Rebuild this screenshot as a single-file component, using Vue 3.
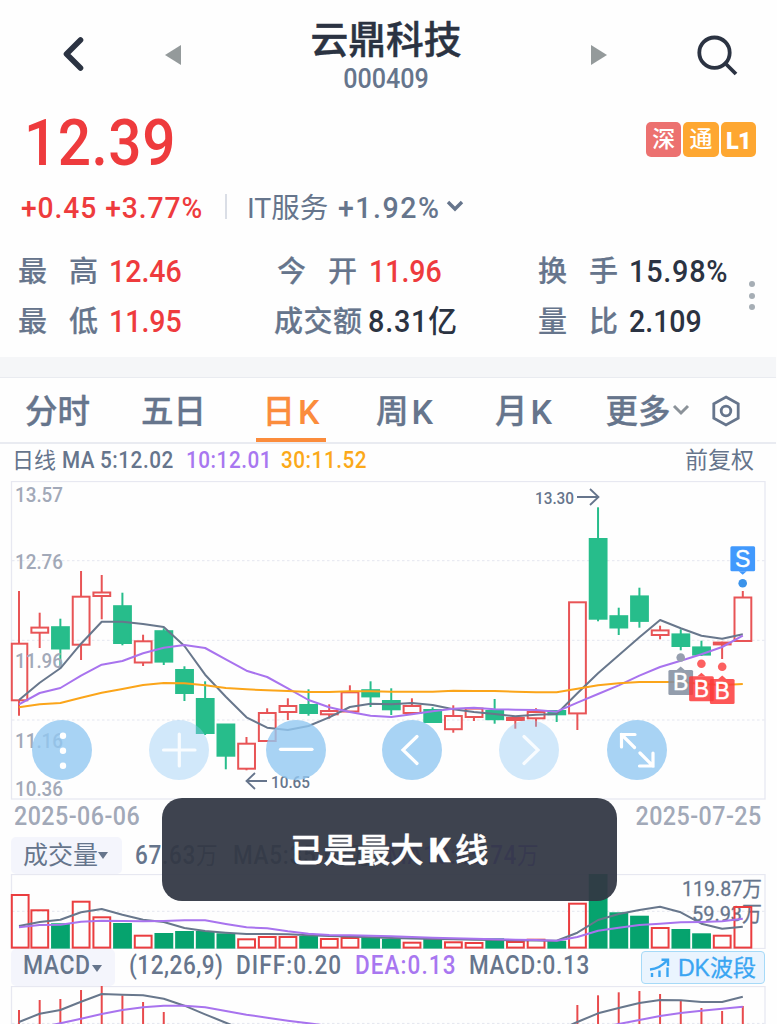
<template>
  <div class="stock-page">
    <header class="header">
      <svg class="back" width="26" height="40" viewBox="0 0 26 40">
        <path d="M20.5 6 L6.5 20 L20.5 34" />
      </svg>
      <svg class="prev" width="16" height="20" viewBox="0 0 16 20"><path d="M0 10 L16 0 V20 Z" /></svg>
      <div class="title">
        <h1>云鼎科技</h1>
        <div class="code num">000409</div>
      </div>
      <svg class="next" width="16" height="20" viewBox="0 0 16 20"><path d="M16 10 L0 0 V20 Z" /></svg>
      <svg class="search" width="44" height="44" viewBox="0 0 44 44">
        <circle cx="19.5" cy="18.7" r="15.2" />
        <path d="M30.5 29.5 L41 40" />
      </svg>
    </header>

    <section class="quote">
      <div class="price-row">
        <div class="price num">12.39</div>
        <div class="badges">
          <span class="badge red">深</span>
          <span class="badge">通</span>
          <span class="badge level">L1</span>
        </div>
      </div>
      <div class="change-row">
        <span class="change num">+0.45 +3.77%</span>
        <span class="divider"></span>
        <span class="sector">IT服务</span>
        <span class="sector-change num">+1.92%</span>
        <svg width="18" height="12" viewBox="0 0 18 12"><path d="M2 2 L9 9 L16 2" /></svg>
      </div>
      <div class="stats">
        <div v-for="item in stats" :key="item.label" class="stat">
          <span class="stat-label" :class="{ full: item.label.length === 3 }">
            <i v-for="ch in item.label" :key="ch">{{ ch }}</i>
          </span>
          <span class="stat-value num" :class="{ up: item.up, wide: item.wide }">{{ item.value }}</span>
        </div>
        <div class="more-dots"><i></i><i></i><i></i></div>
      </div>
    </section>

    <nav class="tabs">
      <a v-for="tab in tabs" :key="tab.name" class="tab" :class="[tab.key, { active: tab.key === activeTab }]"
         @click="activeTab = tab.key">{{ tab.name }}<b v-if="tab.k">K</b></a>
      <svg class="tab-arrow" width="18" height="14" viewBox="0 0 18 14"><path d="M2 3 L9 10 L16 3" /></svg>
      <svg class="setting" width="30" height="32" viewBox="0 0 30 32">
        <path d="M15 2 L27.2 8.8 V23.2 L15 30 L2.8 23.2 V8.8 Z" />
        <circle cx="15" cy="16" r="4.8" />
      </svg>
    </nav>

    <div class="ma-row">
      <span class="line-name">日线</span>
      <span class="ma num ma-label">MA</span>
      <span class="ma num ma5">5:12.02</span>
      <span class="ma num ma10">10:12.01</span>
      <span class="ma num ma30">30:11.52</span>
      <span class="adjust">前复权</span>
    </div>

    <div class="k-chart">
      <svg width="777" height="320" viewBox="0 481 777 320">
        <rect class="frame" x="11.5" y="481.5" width="753.5" height="317.5" />
        <line v-for="y in [560.7, 640.3, 720]" :key="y" class="grid" x1="12" x2="765" :y1="y" :y2="y" />
        <g v-for="(c, i) in candles" :key="i" :class="c[0] === 1 ? 'rise' : 'fall'">
          <line :x1="cx(i)" :x2="cx(i)" :y1="c[3]" :y2="c[1]" />
          <line :x1="cx(i)" :x2="cx(i)" :y1="c[2]" :y2="c[4]" />
          <rect :x="i === 0 ? 11.8 : cx(i) - 8.3" :y="c[1]" :width="i === 0 ? 15.5 : 16.8" :height="c[2] - c[1]" />
        </g>
        <g class="axis">
          <text v-for="l in priceLabels" :key="l[0]" x="15" :y="l[1]" textLength="48" lengthAdjust="spacingAndGlyphs">{{ l[0] }}</text>
        </g>
        <polyline class="line gray" :points="toPoints(ma5)" />
        <polyline class="line purple" :points="toPoints(ma10)" />
        <polyline class="line yellow" :points="toPoints(ma30)" />
        <g class="extreme">
          <text x="535" y="503.5" textLength="39" lengthAdjust="spacingAndGlyphs">13.30</text>
          <path d="M577 497 H598 M590 489 L598.5 497 L590 505" />
          <text x="271" y="787.8" textLength="39" lengthAdjust="spacingAndGlyphs">10.65</text>
          <path d="M267 781 H247 M255 773 L246.5 781 L255 789" />
        </g>
        <g v-for="m in marks" :key="m.x" class="mark">
          <circle :cx="m.x" :cy="m.dot" r="4.3" :fill="m.dotColor" />
          <rect :x="m.x - 12.3" :y="m.y" width="24.7" height="25" rx="1.5" :fill="m.color" />
          <path :d="markTip(m)" :fill="m.color" />
          <text :x="m.x" :y="m.y + 20.3">{{ m.text }}</text>
        </g>
      </svg>
      <div class="chart-tools">
        <button v-for="t in tools" :key="t.name" class="tool" :class="{ disabled: t.disabled, last: t.name === 'full' }">
          <svg width="60" height="60" viewBox="0 0 60 60">
            <path :d="t.path" />
          </svg>
        </button>
      </div>
    </div>

    <div class="dates">
      <span class="num">2025-06-06</span>
      <span class="num">2025-07-25</span>
    </div>

    <div class="indicator volume-head">
      <span class="selector">成交量<i class="caret"></i></span>
      <span class="num v1">67.63<em>万</em></span>
      <span class="num v2">MA5:35.67<em>万</em></span>
      <span class="num v3">MA10:45.74<em>万</em></span>
    </div>

    <svg class="volume-chart" width="777" height="75" viewBox="0 874 777 75">
      <rect class="frame" x="11.5" y="874.5" width="753.5" height="74" />
      <line class="grid" x1="12" x2="765" y1="911.3" y2="911.3" />
      <g class="vol-label">
        <text x="682" y="896" textLength="80" lengthAdjust="spacingAndGlyphs">119.87万</text>
        <text x="692" y="921" textLength="70" lengthAdjust="spacingAndGlyphs">59.93万</text>
      </g>
      <g v-for="(v, i) in volumes" :key="i" :class="candles[i][0] === 1 ? 'vol-rise' : 'vol-fall'">
        <rect :x="i === 0 ? 11.8 : cx(i) - 8.3" :y="v + 1" width="16.8" :height="946.6 - v" />
      </g>
      <polyline class="line gray" :points="toPoints(volMa5)" />
      <polyline class="line purple" :points="toPoints(volMa10)" />
    </svg>

    <div class="indicator macd-head">
      <span class="selector num"><span>MACD</span><i class="caret"></i></span>
      <span class="num m1">(12,26,9)</span>
      <span class="num m2">DIFF:0.20</span>
      <span class="num m3">DEA:0.13</span>
      <span class="num m4">MACD:0.13</span>
      <button class="dk">
        <svg width="22" height="22" viewBox="0 0 22 22">
          <path d="M1 12.5 C8 12 14 8 18 3.5 M12.5 2.8 H19 V9 M3 16 V20 M10.5 13.5 V20 M18.5 10.5 V20" />
        </svg>
        <span>DK波段</span>
      </button>
    </div>

    <svg class="macd-chart" width="777" height="38" viewBox="0 986 777 38">
      <rect class="frame" x="11.5" y="986.5" width="753.5" height="60" />
      <line class="grid" x1="12" x2="765" y1="1023.4" y2="1023.4" />
      <line v-for="b in macdBars" :key="b[0]" class="macd-bar" :x1="cx(b[0])" :x2="cx(b[0])" :y1="b[1]" y2="1024" />
      <polyline class="line gray" :points="toPoints(diff)" />
      <polyline class="line purple" :points="toPoints(dea)" />
    </svg>

    <div v-if="toast" class="toast"><span>已是最大</span><b>K</b><span>线</span></div>
  </div>
</template>

<script setup>
import { ref } from 'vue'

const activeTab = ref('day')
const toast = ref(true)

const stats = [
  { label: '最高', value: '12.46', up: true },
  { label: '今开', value: '11.96', up: true },
  { label: '换手', value: '15.98%', wide: true },
  { label: '最低', value: '11.95', up: true },
  { label: '成交额', value: '8.31亿', wide: true },
  { label: '量比', value: '2.109' }
]

const tabs = [
  { key: 'time', name: '分时' },
  { key: 'five', name: '五日' },
  { key: 'day', name: '日', k: true },
  { key: 'week', name: '周', k: true },
  { key: 'month', name: '月', k: true },
  { key: 'more', name: '更多' }
]

const tools = [
  { name: 'more', path: 'M31 15.8 v.01 M31 30.8 v.01 M31 45.8 v.01' },
  { name: 'plus', path: 'M14.5 30 H46 M30.3 14 V46', disabled: true },
  { name: 'minus', path: 'M14.5 29.3 H46' },
  { name: 'left', path: 'M35 16.5 L21 30 L35 43.5' },
  { name: 'right', path: 'M25 16.5 L39 30 L25 43.5', disabled: true },
  { name: 'full', path: 'M14.5 27 V14.5 H28 M14.5 14.5 L27.5 27.5 M33 33 L46 46 M32.5 46 H46 V33' }
]

// [1涨 0跌, 实体上沿, 实体下沿, 最高, 最低]
const candles = [
  [1, 643.7, 700.3, 591, 715.7], [1, 627.6, 632.7, 612.7, 648], [0, 627.2, 648.5, 618.7, 665.7],
  [1, 596.7, 644.7, 571, 660], [1, 592.5, 596, 575, 619.3], [0, 606.2, 643, 592.7, 645.3],
  [1, 641.3, 662.5, 634.7, 666], [0, 631.2, 661.6, 628.3, 665], [0, 670, 693, 666.3, 701],
  [0, 699, 733, 681.3, 735], [0, 724.5, 755.7, 724, 769.3], [1, 743.7, 768.7, 737, 770.3],
  [1, 713, 741, 708.3, 741], [1, 706, 712, 698.3, 720], [0, 705, 713, 689.3, 715.7],
  [1, 711, 714.3, 704.3, 718.7], [1, 692.3, 711.5, 685.3, 712], [0, 690.2, 696.4, 681.3, 707],
  [0, 701, 709.3, 688.3, 715], [1, 706, 713, 698.3, 714], [0, 710, 722, 707.3, 722],
  [1, 716, 729.2, 705.3, 732.7], [1, 708.6, 717, 708, 721], [0, 711, 719.2, 699, 723.7],
  [1, 718, 720, 717, 728.7], [1, 712, 718.3, 708.3, 726.7], [0, 711, 714.3, 710, 722],
  [1, 602.3, 713.4, 602, 730], [0, 539, 618.7, 507.3, 621.3], [0, 616.2, 627.5, 607.7, 635],
  [0, 596.4, 620.9, 587.7, 627.7], [1, 630.4, 635, 625.7, 639.3], [0, 634.4, 646, 629.3, 650.3],
  [0, 647.4, 654.6, 640.7, 656], [1, 642.6, 644.4, 641.7, 659], [1, 597.5, 641, 591, 641]
]

const ma5 = [700, 682.7, 668.3, 643.7, 621.7, 621.7, 624, 627, 646, 674.7, 696.7, 717.3, 727.7, 730, 726, 717.3, 707, 703.7,
  704.3, 703, 705, 709.3, 712, 714, 716.3, 714.7, 714, 693.3, 673.3, 655.3, 637.3, 620, 628.3, 635.7, 638.7, 634.3]
const ma10 = [704.3, 693, 688, 675.7, 664.7, 661, 653.3, 647.7, 645, 648, 659.3, 670.7, 677, 688.3, 700, 707.3, 712, 715.7,
  717, 714.3, 711.3, 708.7, 707.7, 709.3, 709.7, 710, 711.7, 702.7, 694, 685.3, 675.7, 667, 660.7, 654.3, 647, 635.7]
const ma30 = [707.3, 704.3, 703, 697.7, 692.7, 689, 685, 683, 683.3, 685.3, 688, 689.3, 690.3, 691, 692, 692, 691.3, 691.3,
  691.7, 691.7, 691.7, 690.7, 691, 691, 691.7, 692.3, 692.3, 688.7, 685.3, 683.3, 682, 682, 682, 684, 685, 684]

const volumes = [894, 909.3, 923.3, 900.7, 916.3, 923, 934.7, 933, 931, 931, 933.3, 938.3, 936, 936, 936, 938, 937, 937,
  938.7, 941.7, 939, 941.3, 942, 938.3, 941, 938.7, 940.7, 902.7, 874, 912.3, 915.7, 927, 929, 933.3, 934.7, 906]
const volMa5 = [926, 922, 919.7, 912.3, 909, 914.7, 919.7, 922, 928, 931, 932.7, 934, 934, 934.3, 935.3, 936, 936.5, 937.3,
  938, 938.5, 939, 939.3, 939.7, 940, 940.3, 940.5, 940.7, 932.7, 920, 914, 910, 906.7, 912.3, 923.7, 928.7, 926.7]
const volMa10 = [927.3, 925, 924.7, 921.7, 920.7, 921, 921.3, 921, 920.3, 920.3, 924, 927.3, 928.3, 931.3, 933.7, 935, 935.3,
  935.7, 936.3, 937, 937.7, 938.3, 938.7, 939.3, 939.7, 940, 940.7, 937, 930.7, 927.7, 925, 923.7, 922.3, 922, 921.3, 918.7]

const macdBars = [[0, 1010], [1, 1000], [2, 999], [3, 990], [4, 986], [5, 995.3], [6, 1002], [7, 1012],
  [27, 1005], [28, 995.3], [29, 992.3], [30, 991], [31, 994], [32, 1001], [33, 1008], [34, 1011], [35, 1006]]
const diff = [1022, 1013.7, 1010, 1001.7, 994, 994.7, 995.3, 998.7, 1005.7, 1014.3, 1022.7, 1031, 1040, 1040, 1040, 1040, 1040,
  1040, 1040, 1040, 1040, 1040, 1040, 1040, 1040, 1040, 1031, 1022, 1013.3, 1008, 1003, 1000, 1000.3, 1002, 1002, 996.7]
const dea = [1032, 1027.5, 1023.3, 1018.7, 1014, 1010, 1007.3, 1005.7, 1005.7, 1007.3, 1011, 1014.7, 1017.7, 1020.7, 1023.3, 1026,
  1034, 1040, 1040, 1040, 1040, 1040, 1040, 1040, 1040, 1040, 1040, 1034, 1028, 1024, 1020, 1016, 1013, 1010.7, 1008.7, 1006.7]

const priceLabels = [['13.57', 502], ['12.76', 569], ['11.96', 667.5], ['11.16', 747.5], ['10.36', 795.5]]

const marks = [
  { text: 'S', x: 742.7, y: 546.3, dot: 583.3, color: '#4199fd', dotColor: '#3b93ea' },
  { text: 'B', x: 680.7, y: 670, dot: 657.5, color: 'rgba(132,143,160,.88)', dotColor: '#969fae' },
  { text: 'B', x: 701.4, y: 676.3, dot: 663.7, color: 'rgba(253,58,58,.85)', dotColor: '#fc6060' },
  { text: 'B', x: 722.2, y: 679, dot: 666.7, color: 'rgba(253,58,58,.85)', dotColor: '#fc6060' }
]

const cx = (i) => Math.round((19 + i * 20.68) * 100) / 100

const toPoints = (list) => list.map((y, i) => `${cx(i)},${y}`).join(' ')

const markTip = (m) => {
  if (m.text === 'S') return `M${m.x - 4} ${m.y + 25} h8 l-4 3.5 z`
  return `M${m.x - 4} ${m.y} h8 l-4 -3.5 z`
}
</script>

<style>
body {
  margin: 0;
  background: #fff;
}
</style>

<style scoped>
.stock-page {
  position: relative;
  width: 777px;
  height: 1024px;
  overflow: hidden;
  background: #fefefe;
  color: #66758c;
  font-family: Roboto, "Noto Sans CJK SC", sans-serif;
}

.num {
  display: inline-block;
  font-weight: 500;
  white-space: nowrap;
  transform: scaleX(0.9);
  transform-origin: left center;
}

i, em {
  font-style: normal;
}

svg {
  display: block;
  fill: none;
  flex: none;
}

/* 顶部 */
.header {
  display: flex;
  height: 104px;
}

.back {
  margin: 34px 0 0 60px;
  stroke: #2b3342;
  stroke-width: 5.6;
  stroke-linecap: round;
  stroke-linejoin: round;
}

.prev,
.next {
  margin-top: 44.5px;
  fill: #949a9b;
}

.prev {
  margin-left: 79px;
}

.title {
  width: 410px;
  text-align: center;
}

h1 {
  margin: 17px 0 0;
  font-size: 37.8px;
  line-height: 46px;
  font-weight: 500;
  color: #2b3342;
  -webkit-text-stroke: 0.45px #2b3342;
}

.code {
  font-size: 27px;
  line-height: 32px;
  transform: scaleX(0.93);
  transform-origin: center;
}

.search {
  margin: 33.5px 0 0 88px;
  stroke: #2b3342;
  stroke-width: 3.8;
}

/* 报价 */
.quote {
  height: 253px;
}

.price-row {
  display: flex;
  justify-content: space-between;
  height: 76px;
  padding: 0 21px 0 24px;
}

.price {
  font-size: 65px;
  line-height: 79px;
  letter-spacing: 0.6px;
  color: #ee3b3d;
}

.badges {
  display: flex;
  gap: 2px;
  margin-top: 17.5px;
}

.badge {
  width: 35.3px;
  height: 35.3px;
  border-radius: 5px;
  background: #fea731;
  color: #fff;
  font-size: 23px;
  font-weight: 500;
  line-height: 36px;
  text-align: center;
}

.badge.level {
  font-weight: 900;
  font-size: 23.5px;
  line-height: 38px;
  letter-spacing: -0.8px;
}

.badge.red {
  background: #ec7170;
}

.change-row {
  display: flex;
  align-items: center;
  height: 52px;
  padding-left: 21px;
}

.change {
  width: 204px;
  margin-top: 2px;
  font-size: 30px;
  color: #ee3b3d;
  transform: scaleX(0.94);
  letter-spacing: 1px;
}

.divider {
  width: 2px;
  height: 25px;
  background: #dadee6;
}

.sector {
  width: 91px;
  margin: 5px 0 0 20px;
  font-size: 28.5px;
  line-height: 40px;
  white-space: nowrap;
}

.sector-change {
  width: 109px;
  margin-top: 2px;
  font-size: 30px;
  transform: scaleX(0.95);
  letter-spacing: 1.6px;
}

.change-row svg {
  margin-left: -1px;
  stroke: #66758c;
  stroke-width: 3.4;
}

.stats {
  position: relative;
  display: grid;
  grid-template-columns: 256px 264px 220px;
  grid-auto-rows: 50px;
  padding: 15px 0 0 18px;
}

.stat {
  display: flex;
  align-items: center;
}

.stat-label {
  display: flex;
  justify-content: space-between;
  width: 80px;
  margin: 0 11px 0 0;
  font-size: 29px;
  line-height: 50px;
  font-weight: 500;
  -webkit-text-stroke: 0.2px #66758c;
}

.stat:nth-child(2) .stat-label {
  margin-left: 3px;
  margin-right: 12px;
}

.stat-label.full {
  width: 88px;
  margin-right: 6px;
}

.stat-value {
  font-size: 31px;
  line-height: 50px;
  color: #2b3342;
  transform: scaleX(0.92);
}

.stat-value.wide {
  transform: scaleX(0.93);
  letter-spacing: 0.8px;
}

.stat-value.up {
  color: #ee3b3d;
}

.more-dots {
  position: absolute;
  left: 749px;
  top: 49px;
  display: flex;
  flex-direction: column;
  gap: 5.6px;
}

.more-dots i {
  width: 6px;
  height: 6px;
  border-radius: 50%;
  background: #a6aeb5;
}

/* 周期 */
.tabs {
  display: flex;
  box-sizing: border-box;
  width: 776px;
  height: 87px;
  border-top: 20px solid #f5f6f8;
  border-bottom: 2px solid #e9ebf1;
  box-shadow: inset 0 1px 0 #e9ebf0;
  padding-left: 25px;
}

.tab {
  display: flex;
  box-sizing: border-box;
  height: 64.5px;
  font-size: 32.5px;
  font-weight: 500;
  line-height: 70px;
  white-space: nowrap;
  -webkit-text-stroke: 0.35px currentColor;
}

.tab b {
  margin-left: 3px;
  font-size: 34px;
  font-weight: 500;
  -webkit-text-stroke: 0;
}

.time {
  width: 116px;
}

.five {
  width: 114.5px;
}

.day {
  width: 70.5px;
  padding-left: 7px;
}

.week {
  margin-left: 50px;
  width: 119px;
}

.month {
  width: 110.5px;
}

.more {
  width: 66px;
}

.active {
  color: #fb8c3c;
  border-bottom: 4.5px solid #fb8c3c;
}

.tab-arrow {
  margin-top: 26px;
  stroke: #8b9299;
  stroke-width: 3;
}

.setting {
  margin: 17.5px 0 0 21px;
  stroke: #66758c;
  stroke-width: 2.8;
}

/* 均线 */
.ma-row {
  display: flex;
  align-items: center;
  box-sizing: border-box;
  height: 37px;
  padding: 0 23px 4px 12px;
  line-height: 33px;
}

.line-name {
  width: 50px;
  font-size: 22px;
}

.ma {
  font-size: 23px;
  letter-spacing: 0.6px;
}

.ma-label {
  width: 38px;
}

.ma5 {
  width: 86px;
}

.ma10 {
  width: 95px;
  color: #a877f0;
}

.ma30 {
  color: #fba919;
}

.adjust {
  margin-left: auto;
  font-size: 23px;
}

/* K线图 */
.k-chart {
  position: relative;
  height: 320px;
}

.frame {
  stroke: #e7e8f1;
  stroke-width: 1.3;
}

.grid {
  stroke: #e4e6ef;
  stroke-width: 1;
  stroke-dasharray: 2.5 2.5;
}

.rise {
  stroke: #e85456;
  stroke-width: 2;
  fill: none;
}

.fall {
  stroke: #27bd8b;
  stroke-width: 2;
  fill: #27bd8b;
}

.line {
  fill: none;
  stroke-width: 2;
  stroke-linejoin: round;
}

.gray {
  stroke: #68778c;
}

.purple {
  stroke: #a873ee;
}

.yellow {
  stroke: #fba51a;
}

.axis text {
  font-size: 20.5px;
  font-weight: 500;
  fill: #a2a9b8;
}

.extreme text {
  font-size: 17px;
  font-weight: 500;
  fill: #66758c;
}

.extreme path {
  stroke: #66758c;
  stroke-width: 1.8;
}

.mark text {
  font-family: "Liberation Sans", sans-serif;
  font-size: 23px;
  fill: #fff;
  stroke: #fff;
  stroke-width: 0.4;
  text-anchor: middle;
}

.chart-tools {
  position: absolute;
  left: 32px;
  top: 238.5px;
  display: flex;
  gap: 56.8px;
}

.tool {
  width: 60px;
  height: 60px;
  padding: 0;
  border: none;
  border-radius: 50%;
  background: rgba(146, 200, 241, 0.8);
}

.tool.last {
  margin-left: -9px;
}

.tool path {
  stroke: #fff;
  stroke-width: 3.2;
  stroke-linecap: round;
}

.tool:first-child path {
  stroke-width: 6.4;
}

.tool.disabled {
  background: rgba(143, 199, 244, 0.4);
}

.tool.disabled path {
  stroke: rgba(255, 255, 255, 0.85);
}

/* 日期 */
.dates {
  display: flex;
  justify-content: space-between;
  height: 36px;
  padding: 0 15px 0 14px;
  font-size: 25px;
  line-height: 31px;
  color: #a2a9b8;
}

.dates .num {
  transform: scaleX(0.93);
  letter-spacing: 0.5px;
}

.dates .num:last-child {
  transform-origin: right center;
}

/* 指标 */
.indicator {
  display: flex;
  box-sizing: border-box;
  height: 37px;
  padding-left: 11px;
  font-size: 25px;
  line-height: 37px;
}

.selector {
  display: flex;
  align-items: center;
  box-sizing: border-box;
  width: 111px;
  height: 37px;
  padding-left: 12px;
  border-radius: 5px;
  background: #f4f5fc;
  font-size: 25px;
  transform: none;
}

.caret {
  border: 5.5px solid transparent;
  border-top: 7px solid #66758c;
  border-bottom: none;
}

em {
  font-size: 24px;
  font-weight: 400;
}

.v1 {
  margin-left: 13px;
  width: 98px;
  letter-spacing: 0.8px;
}

.v2 {
  width: 154px;
  letter-spacing: 0.8px;
}

.v3 {
  color: #8b5cf0;
  letter-spacing: 0.7px;
}

.vol-rise {
  fill: none;
  stroke: #ea3d3f;
  stroke-width: 2;
}

.vol-fall {
  fill: #06a36e;
  stroke: #06a36e;
  stroke-width: 2;
}

.macd-bar {
  stroke: #e84a4c;
  stroke-width: 2;
}

.vol-label text {
  font-size: 21px;
  fill: #66758c;
  stroke: #66758c;
  stroke-width: 0.3;
}

.macd-head {
  line-height: 34px;
}

.macd-head .selector {
  width: 104px;
  padding-bottom: 3px;
}

.macd-head .selector span {
  width: 69px;
  transform: scaleX(0.92);
  transform-origin: left;
}

.macd-head .selector .caret {
  margin-top: 4px;
}

.macd-head .num {
  letter-spacing: 0.6px;
}

.m1 {
  width: 107px;
  margin-left: 14px;
}

.m2 {
  width: 119px;
}

.macd-head .m2,
.macd-head .m3 {
  letter-spacing: 1.2px;
}

.m3 {
  width: 114px;
  color: #a877f0;
}

.m4 {
  width: 172px;
}

.macd-head .m4 {
  letter-spacing: 0.8px;
}

.dk {
  display: flex;
  flex: none;
  align-items: center;
  box-sizing: border-box;
  width: 124px;
  height: 33px;
  margin-top: 2px;
  padding: 0 0 0 7px;
  border: 1.5px solid #a6daf8;
  border-radius: 4px;
  background: #eaf4fe;
  color: #3aa5f2;
  font-family: "Liberation Sans", "Noto Sans CJK SC", sans-serif;
  font-size: 23px;
  line-height: 32px;
  white-space: nowrap;
  -webkit-text-stroke: 0.3px #3aa5f2;
}

.dk svg {
  margin-right: 7px;
  stroke: #3aa5f2;
  stroke-width: 2.4;
}

.toast {
  position: absolute;
  left: 162px;
  top: 797.7px;
  display: flex;
  justify-content: center;
  width: 454.7px;
  height: 103.3px;
  border-radius: 20px;
  background: rgba(50, 55, 68, 0.94);
  color: #fff;
  font-size: 33.4px;
  font-weight: 500;
  line-height: 106px;
  -webkit-text-stroke: 0.45px #fff;
}

.toast b {
  margin: 0 5px;
  font-weight: 900;
}
</style>
